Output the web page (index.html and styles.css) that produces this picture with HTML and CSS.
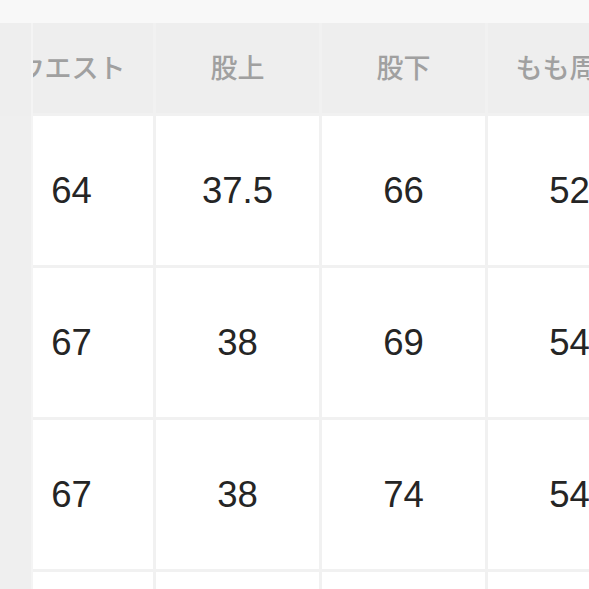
FILE: index.html
```
<!DOCTYPE html>
<html lang="ja">
<head>
<meta charset="utf-8">
<link rel="stylesheet" href="styles.css">
</head>
<body>
<div class="page">
  <div class="topbar"></div>
  <div class="table">
    <div class="sticky">
      <div class="s-head"></div>
      <div class="s-cell"></div>
      <div class="s-cell"></div>
      <div class="s-cell"></div>
      <div class="s-cell"></div>
    </div>
    <div class="scroll">
      <div class="grid">
        <div class="head">ウエスト</div>
        <div class="head">股上</div>
        <div class="head">股下</div>
        <div class="head">もも周り</div>

        <div class="cell">64</div>
        <div class="cell">37.5</div>
        <div class="cell">66</div>
        <div class="cell">52</div>

        <div class="cell">67</div>
        <div class="cell">38</div>
        <div class="cell">69</div>
        <div class="cell">54</div>

        <div class="cell">67</div>
        <div class="cell">38</div>
        <div class="cell">74</div>
        <div class="cell">54</div>

        <div class="cell">70</div>
        <div class="cell">39</div>
        <div class="cell">75</div>
        <div class="cell">56</div>
      </div>
    </div>
  </div>
</div>
</body>
</html>
```
FILE: styles.css
```
html, body {
  margin: 0;
  padding: 0;
  background: #ffffff;
}
.page {
  width: 589px;
  height: 589px;
  overflow: hidden;
  background: #f7f7f7;
}
.topbar {
  height: 23px;
  background: #f8f8f8;
}
.table {
  display: flex;
  background: #f0f0f0;
}
.sticky {
  flex: none;
  width: 31px;
  display: grid;
  grid-template-rows: 93px repeat(4, 149px);
  row-gap: 3px;
  background: #efefef;
  position: relative;
  z-index: 2;
  border-right: 2px solid #f4f4f4;
}
.s-head {
  background: #eeeeee;
}
.s-cell {
  background: #efefef;
}
.scroll {
  flex: 1;
  overflow: hidden;
  background: #efefef;
}
.grid {
  display: grid;
  grid-template-columns: repeat(4, 163px);
  grid-template-rows: 90px repeat(4, 149px);
  gap: 3px;
  margin-left: -43px;
  background: #f1f1f1;
}
.head {
  background: #eeeeee;
  display: flex;
  align-items: center;
  justify-content: center;
  font-family: "Noto Sans CJK JP", "Noto Sans", sans-serif;
  font-weight: 500;
  font-size: 27px;
  color: #a0a0a0;
  white-space: nowrap;
  padding-bottom: 3px;
}
.cell {
  background: #ffffff;
  display: flex;
  align-items: center;
  justify-content: center;
  font-family: "Liberation Sans", Arial, sans-serif;
  font-size: 36.5px;
  color: #252525;
  white-space: nowrap;
}
```
